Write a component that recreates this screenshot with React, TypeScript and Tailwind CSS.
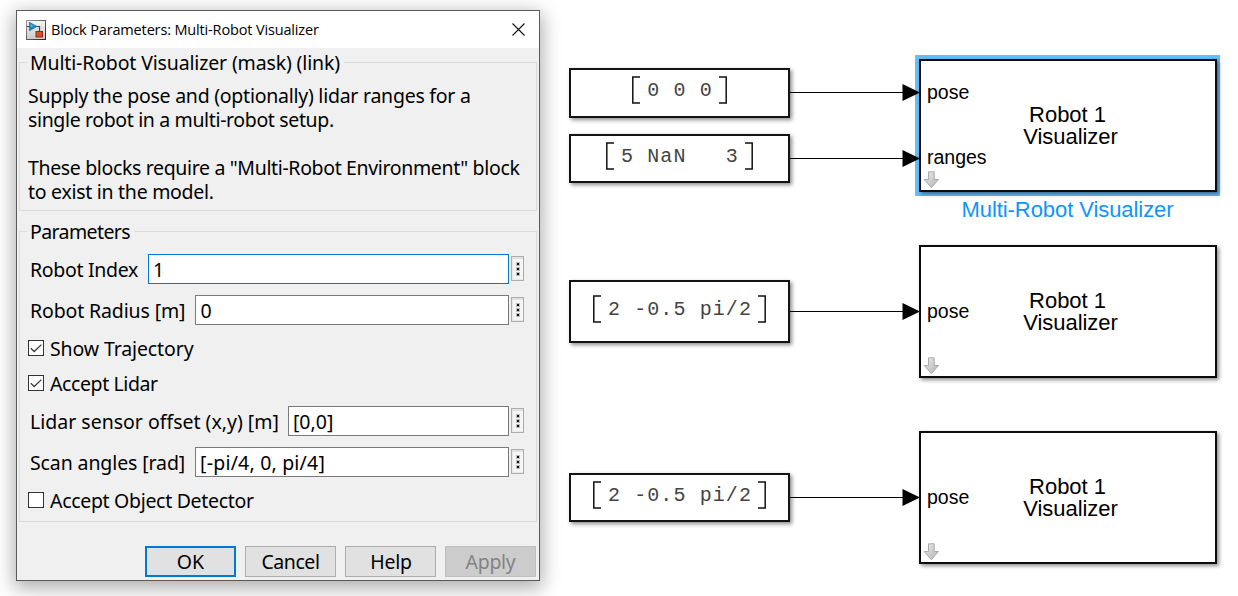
import { ReactNode } from 'react';

function AppIcon() {
  return (
    <svg width="20" height="20" viewBox="0 0 20 20" className="block">
      <defs>
        <linearGradient id="frame" x1="0" y1="0" x2="1" y2="1">
          <stop offset="0" stopColor="#9a9a9a" />
          <stop offset="1" stopColor="#222" />
        </linearGradient>
        <linearGradient id="face" x1="0" y1="0" x2="0" y2="1">
          <stop offset="0" stopColor="#f4f4f4" />
          <stop offset="1" stopColor="#c9cccd" />
        </linearGradient>
      </defs>
      <rect width="20" height="20" fill="url(#frame)" />
      <rect x="1" y="1" width="18" height="18" fill="url(#face)" />
      <path d="M1 6.5H4M9 6.5H13.5V12" stroke="#3c4a52" strokeWidth="1.2" fill="none" />
      <path d="M3.4 2.2L11 6.5L3.4 10.8Z" fill="#2084b8" stroke="#17648f" strokeWidth=".6" />
      <path d="M4.5 4L8 6L4.5 7Z" fill="#59b4df" />
      <rect x="10" y="11.5" width="6.5" height="5.5" fill="#d9502b" stroke="#8f2b12" strokeWidth="1" />
    </svg>
  );
}

function Group({ title, children, className }: { title: ReactNode; children: ReactNode; className: string }) {
  return (
    <section className={`flex flex-col border border-[#dcdcdc] ${className}`}>
      <h2 className="-mt-[12px] ml-[7px] h-6 self-start bg-[#f0f0f0] pr-1 pl-[3px] leading-6 whitespace-nowrap">{title}</h2>
      {children}
    </section>
  );
}

function Field({ label, value, focused = false, spacing, gap }: { label: ReactNode; value: ReactNode; focused?: boolean; spacing: string; gap: string }) {
  return (
    <div className={`flex h-[30px] items-start pr-3 pl-[10px] ${spacing}`}>
      <label className={`shrink-0 leading-[31px] whitespace-nowrap ${gap}`}>{label}</label>
      <div className={`h-[30px] min-w-0 flex-1 border bg-white pl-1 leading-[29px] whitespace-nowrap ${focused ? 'border-[#0078d7]' : 'border-[#7a7a7a]'}`}>
        {value}
      </div>
      <button className="mt-[2px] ml-[2px] flex h-[25px] w-[13px] shrink-0 flex-col items-start border border-[#adadad] bg-[#f5f5f5] pt-[5px] pl-[4px] shadow-[inset_0_2px_0_#e1e1e1,inset_1px_0_0_#e8e8e8,inset_0_-1px_0_#e8e8e8]">
        <svg width="4" height="14" viewBox="0 0 4 14" className="block" shapeRendering="crispEdges">
          {[0, 5, 10].map((y) => (
            <g key={y}>
              <rect x="0" y={y} width="4" height="4" fill="#bdbdbd" />
              <rect x="1" y={y + 1} width="2" height="2" fill="#111" />
            </g>
          ))}
        </svg>
      </button>
    </div>
  );
}

function Check({ label, checked = false, spacing }: { label: ReactNode; checked?: boolean; spacing: string }) {
  return (
    <div className={`flex h-4 items-center pl-2 ${spacing}`}>
      <span className="flex h-4 w-4 items-center justify-center border border-[#333] bg-white">
        {checked && (
          <svg width="14" height="14" viewBox="0 0 14 14" className="block">
            <path d="M1.8 7.2L5.2 10.5L12.4 3.6" fill="none" stroke="#3a3a3a" strokeWidth="1.3" />
          </svg>
        )}
      </span>
      <span className="relative top-[1px] ml-[6px] leading-6 whitespace-nowrap">{label}</span>
    </div>
  );
}

function Dialog() {
  return (
    <div className="mt-[10px] ml-4 flex h-[571px] w-[524px] shrink-0 flex-col border border-[#5a5a5a] bg-[#f0f0f0] font-['Noto_Sans',sans-serif] text-[19.5px] text-black shadow-[0_5px_18px_2px_rgba(0,0,0,0.33)]">
      <header className="flex h-[37px] shrink-0 items-center bg-white pr-[14px] pl-[9px]">
        <AppIcon />
        <span className="ml-[5px] font-['Open_Sans',sans-serif] text-[14.5px] tracking-[-0.15px]">Block Parameters: Multi-Robot Visualizer</span>
        <svg width="13" height="13" viewBox="0 0 13 13" className="mb-px ml-auto block">
          <path d="M.5 .5L12.5 12.5M12.5 .5L.5 12.5" stroke="#111" strokeWidth="1.1" />
        </svg>
      </header>

      <Group className="mt-[14px] mr-[2px] ml-[2px] h-[149px] shrink-0" title={<span className="tracking-[-0.15px]">Multi-Robot Visualizer (mask) (link)</span>}>
        <div className="mt-[9px] ml-2 leading-6 whitespace-nowrap">
          <p className="tracking-[-0.25px]">Supply the pose and (optionally) lidar ranges for a</p>
          <p className="tracking-[-0.36px]">single robot in a multi-robot setup.</p>
          <p className="mt-6 tracking-[-0.35px]">These blocks require a "Multi-Robot Environment" block</p>
          <p className="tracking-[-0.28px]">to exist in the model.</p>
        </div>
      </Group>

      <Group className="mt-5 mr-[2px] ml-[2px] h-[291px] shrink-0" title={<span className="tracking-[-0.6px]">Parameters</span>}>
        <Field spacing="mt-[10px]" gap="mr-[10px]" focused label={<span className="tracking-[-0.3px]">Robot Index</span>} value="1" />
        <Field spacing="mt-[11px]" gap="mr-[10px]" label={<span className="tracking-[-0.13px]">Robot Radius [m]</span>} value="0" />
        <Check spacing="mt-[15px]" checked label={<span className="tracking-[-0.12px]">Show Trajectory</span>} />
        <Check spacing="mt-[19px]" checked label={<span className="tracking-[-0.4px]">Accept Lidar</span>} />
        <Field spacing="mt-[15px]" gap="mr-[9px]" label="Lidar sensor offset (x,y) [m]" value="[0,0]" />
        <Field spacing="mt-[11px]" gap="mr-[10px]" label={<span className="tracking-[-0.11px]">Scan angles [rad]</span>} value={<span className="tracking-[0.2px]">[-pi/4, 0, pi/4]</span>} />
        <Check spacing="mt-[15px]" label={<span className="tracking-[-0.31px]">Accept Object Detector</span>} />
      </Group>

      <footer className="mt-6 mr-[3px] flex justify-end gap-[9px]">
        <button className="flex h-[31px] w-[91px] justify-center border-2 border-[#0078d7] bg-[#e1e1e1] leading-[28px]">OK</button>
        <button className="flex h-[31px] w-[91px] justify-center border border-[#adadad] bg-[#e1e1e1] leading-[30px] tracking-[-0.45px]">Cancel</button>
        <button className="flex h-[31px] w-[91px] justify-center border border-[#adadad] bg-[#e1e1e1] pl-px leading-[30px] tracking-[-0.3px]">Help</button>
        <button className="flex h-[31px] w-[91px] justify-center border border-[#bfbfbf] bg-[#cccccc] leading-[30px] tracking-[-0.3px] text-[#838383]">Apply</button>
      </footer>
    </div>
  );
}

function ConstantBlock({ place, pad, value }: { place: string; pad: string; value: string }) {
  return (
    <div className={`absolute left-[569px] flex w-[221px] items-start justify-center border-2 border-[#141414] bg-white shadow-[2px_2px_4px_rgba(0,0,0,0.45)] ${place} ${pad}`}>
      <svg width="8" height="28" viewBox="0 0 8 28" className="block">
        <path d="M8 1H.8V27H8" fill="none" stroke="#111" strokeWidth="1.5" />
      </svg>
      <span className="mr-[6px] ml-[7px] pt-[2px] font-['Liberation_Mono',monospace] text-[20px] leading-[26px] tracking-[1.1px] whitespace-pre text-[#444]">{value}</span>
      <svg width="8" height="28" viewBox="0 0 8 28" className="block">
        <path d="M0 1H7.2V27H0" fill="none" stroke="#111" strokeWidth="1.5" />
      </svg>
    </div>
  );
}

function Wire({ place }: { place: string }) {
  return (
    <svg width="130" height="18" viewBox="0 0 130 18" className={`absolute left-[790px] block ${place}`}>
      <path d="M0 9.5H114" stroke="#000" strokeWidth="1" />
      <path d="M112.5 1V18L130 9.5Z" fill="#000" />
    </svg>
  );
}

function DownArrow() {
  return (
    <svg width="16" height="18" viewBox="0 0 16 18" className="absolute bottom-[1px] left-[2px] block">
      <defs>
        <linearGradient id="arrow" x1="0" y1="0" x2="1" y2="1">
          <stop offset="0" stopColor="#eee" />
          <stop offset="1" stopColor="#b0b0b0" />
        </linearGradient>
      </defs>
      <path d="M5.5 .8H11.2V8.5H15.5L8.4 16.7L1.2 8.5H5.5Z" fill="url(#arrow)" stroke="#aaa" strokeWidth="1" />
    </svg>
  );
}

function VisualizerBlock({ place, selected = false, ports }: { place: string; selected?: boolean; ports: { name: string; at: string }[] }) {
  return (
    <>
      {selected && <div className="absolute top-[55px] left-[915px] h-[141px] w-[305px] bg-[#64befd]" />}
      <div className={`absolute left-[919px] h-[133px] w-[298px] border-2 border-[#0c0c0c] bg-white pt-[43px] font-['Liberation_Sans',Arial,sans-serif] text-black shadow-[2px_2px_4px_rgba(0,0,0,0.45)] ${place}`}>
        <div className="pl-[5px] text-center text-[22px] leading-[22px] tracking-[-0.05px] whitespace-pre">
          <div>{'Robot 1 '}</div>
          <div>Visualizer</div>
        </div>
        {ports.map((p) => (
          <span key={p.name} className={`absolute left-[6px] text-[19.5px] leading-6 ${p.at}`}>{p.name}</span>
        ))}
        <DownArrow />
      </div>
    </>
  );
}

export default function App() {
  return (
    <main className="relative flex h-[596px] w-[1238px] overflow-hidden bg-white">
      <Dialog />

      <ConstantBlock place="top-[68px] h-[50px]" pad="pt-[6px]" value="0 0 0" />
      <ConstantBlock place="top-[134px] h-[49px]" pad="pt-[6px]" value="5 NaN   3" />
      <ConstantBlock place="top-[280px] h-[63px]" pad="pt-[13px]" value="2 -0.5 pi/2" />
      <ConstantBlock place="top-[473px] h-[49px]" pad="pt-[6px]" value="2 -0.5 pi/2" />

      <VisualizerBlock place="top-[59px]" selected ports={[{ name: 'pose', at: 'top-[19px]' }, { name: 'ranges', at: 'top-[84px]' }]} />
      <VisualizerBlock place="top-[245px]" ports={[{ name: 'pose', at: 'top-[52px]' }]} />
      <VisualizerBlock place="top-[431px]" ports={[{ name: 'pose', at: 'top-[52px]' }]} />
      <div className="absolute top-[197px] left-[915px] w-[305px] text-center font-['Liberation_Sans',Arial,sans-serif] text-[22px] leading-[26px] tracking-[-0.07px] text-[#0d94ff]">Multi-Robot Visualizer</div>

      <Wire place="top-[83px]" />
      <Wire place="top-[149px]" />
      <Wire place="top-[302px]" />
      <Wire place="top-[488px]" />
    </main>
  );
}
